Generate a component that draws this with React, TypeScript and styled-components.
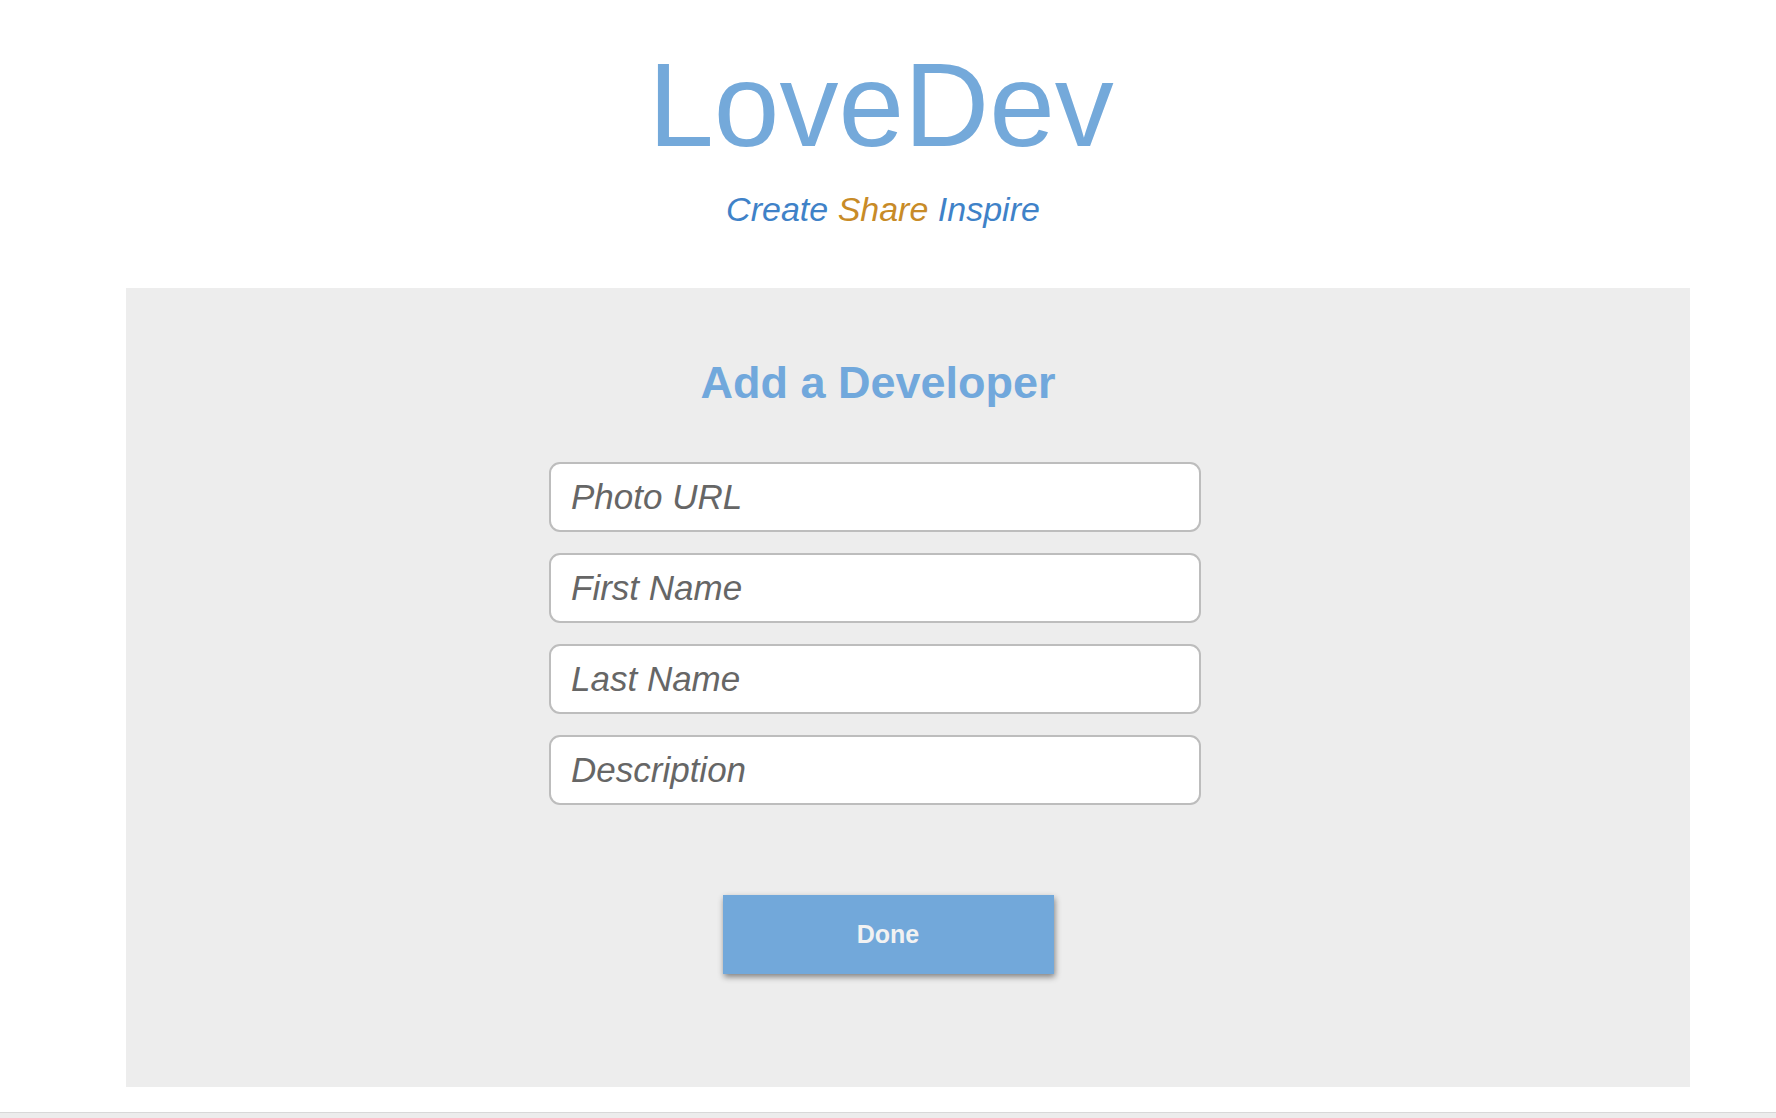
import React from "react";
import styled, { createGlobalStyle } from "styled-components";

const GlobalStyle = createGlobalStyle`
  html, body {
    margin: 0;
    padding: 0;
    background: #ffffff;
    font-family: "Liberation Sans", Arial, Helvetica, sans-serif;
  }
  * { box-sizing: border-box; }
`;

const Page = styled.div`
  display: flex;
  flex-direction: column;
  min-height: 1118px;
  width: 1776px;
  overflow: hidden;
`;

const Header = styled.header`
  display: flex;
  flex-direction: column;
  align-items: center;
  padding: 46px 14px 0 0;
`;

const Title = styled.h1`
  margin: 0;
  font-size: 118px;
  line-height: 1;
  font-weight: 400;
  color: #74a9da;
`;

const Tagline = styled.p`
  margin: 28px 0 0 4px;
  font-size: 34px;
  line-height: 1;
  font-style: italic;
  color: #3f82c8;
`;

const Word = styled.span<{ $accent?: boolean }>`
  color: ${(p) => (p.$accent ? "#c88b27" : "#3f82c8")};
`;

const Panel = styled.section`
  margin: 62px 86px 25px 126px;
  background: #ededed;
  display: flex;
  flex-direction: column;
  align-items: center;
  padding: 72px 60px 113px 0;
`;

const Heading = styled.h2`
  margin: 0;
  font-size: 45px;
  line-height: 1;
  font-weight: 700;
  color: #71a8dc;
`;

const Fields = styled.div`
  margin: 57px 6px 0 0;
  display: flex;
  flex-direction: column;
  gap: 21px;
`;

const Field = styled.input`
  width: 652px;
  height: 70px;
  border: 2px solid #bdbdbd;
  border-radius: 11px;
  background: #ffffff;
  padding: 0 20px;
  font-family: "Liberation Sans", Arial, Helvetica, sans-serif;
  font-size: 35px;
  font-style: italic;
  color: #555;
  outline: none;

  &::placeholder {
    color: #666666;
    font-style: italic;
  }
`;

const DoneButton = styled.button`
  margin: 90px 0 0 20px;
  width: 331px;
  height: 79px;
  border: none;
  background: #72a8da;
  color: #f2f2f2;
  font-family: "Liberation Sans", Arial, Helvetica, sans-serif;
  font-size: 25px;
  font-weight: 700;
  box-shadow: 1px 3px 6px rgba(0, 0, 0, 0.45);
  cursor: pointer;
`;

const BottomStrip = styled.div`
  height: 6px;
  border-top: 1px solid #d8d8d8;
  background: #ececec;
`;

export default function App() {
  return (
    <>
      <GlobalStyle />
      <Page>
        <Header>
          <Title>LoveDev</Title>
          <Tagline>
            <Word>Create</Word> <Word $accent>Share</Word> <Word>Inspire</Word>
          </Tagline>
        </Header>
        <Panel>
          <Heading>Add a Developer</Heading>
          <Fields>
            <Field placeholder="Photo URL" />
            <Field placeholder="First Name" />
            <Field placeholder="Last Name" />
            <Field placeholder="Description" />
          </Fields>
          <DoneButton>Done</DoneButton>
        </Panel>
        <BottomStrip />
      </Page>
    </>
  );
}
